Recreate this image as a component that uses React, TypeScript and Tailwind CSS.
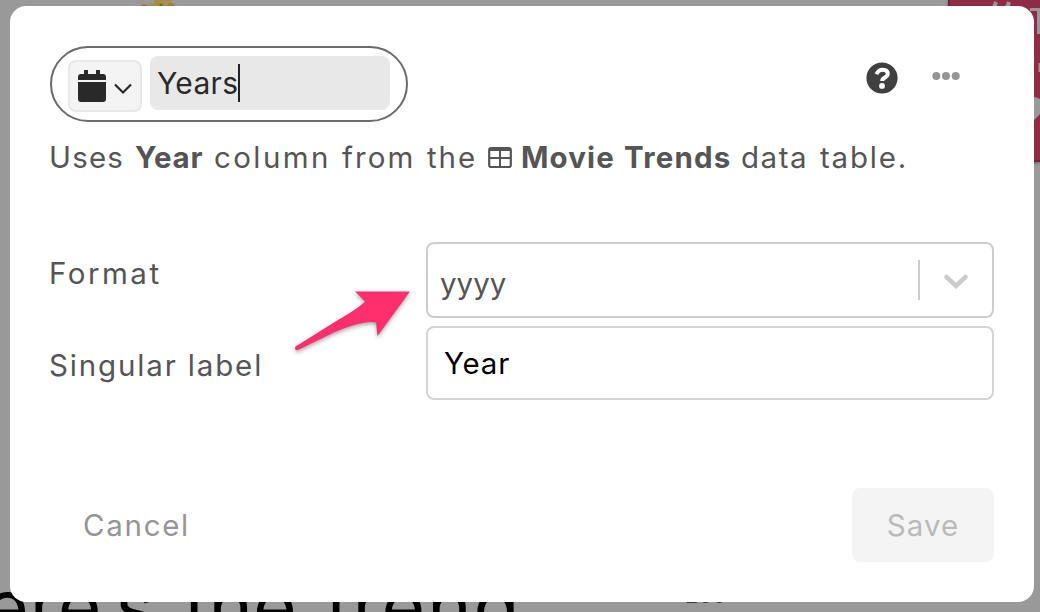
import React from "react";

function Backdrop() {
  return (
    <div className="absolute inset-0 overflow-hidden bg-[#999999]">
      <svg className="absolute left-[136px] top-0" width="44" height="12" viewBox="0 0 44 12">
        <circle cx="8" cy="8" r="4" fill="#9c7c42" />
        <circle cx="16" cy="8" r="5" fill="#a48f5b" />
        <circle cx="25" cy="1" r="7" fill="#a78c43" />
        <circle cx="32" cy="2" r="4" fill="#a48f5b" />
        <circle cx="35" cy="7" r="4" fill="#9c7c42" />
        <circle cx="25" cy="5" r="1.500" fill="#8b5b20" />
      </svg>
      <div className="absolute left-[948px] top-0 h-[162px] w-[92px] overflow-hidden border-b-2 border-l-2 border-[#6f2238] bg-[#8f2b45] text-[#999999] shadow-[0_1px_3px_rgba(0,0,0,0.4)]">
        <svg className="absolute inset-0" width="92" height="160" viewBox="0 0 92 160">
          <path d="M46 2L44 8M59 2L57 8" stroke="#999999" strokeWidth="4" />
          <path d="M80 9.500H92M88.500 9V34" stroke="#999999" strokeWidth="3" />
          <path d="M90 63V72" stroke="#999999" strokeWidth="3" />
          <path d="M84 97Q93 98 93 106Q93 113 84 120Z" fill="#999999" />
        </svg>
      </div>
      <div className="absolute left-[-15px] top-[556px] whitespace-pre text-[75px] leading-[100px] text-black">
        <span className="absolute left-0 top-0 tracking-[1px]">ere’s</span>
        <span className="absolute left-[199px] top-0">the</span>
        <span className="absolute left-[341px] top-0 tracking-[2px]">trend</span>
      </div>
      <span className="absolute left-[685px] top-[581px] text-[22px] leading-[28px] text-[#333333]">200</span>
    </div>
  );
}

function TitleEditor() {
  return (
    <div className="flex h-[76px] w-[358px] items-start rounded-full border-2 border-[#6b6b6b] pl-4 pt-2">
      <button className="mt-1 flex h-[52px] w-[74px] shrink-0 items-start rounded-lg border-2 border-[#e8e8e8] bg-[#f4f4f4]">
        <svg width="70" height="48" viewBox="0 0 70 48">
          <path
            d="M8 18V15Q8 12 11 12H14V8H18V12H26V8H30V12H33Q36 12 36 15V18ZM8 20H36V37Q36 40 33 40H11Q8 40 8 37Z"
            fill="#292929"
          />
          <path d="M45 22.500L53 30.500L61 22.500" fill="none" stroke="#292929" strokeWidth="2.200" />
        </svg>
      </button>
      <div className="ml-2 flex h-[54px] w-[240px] items-start rounded-lg bg-[#e8e8e8] pl-[7px] pt-2">
        <span className="w-[81px] whitespace-nowrap text-[30px] leading-[38px] tracking-[0.3px] text-[#292929]">Years</span>
        <span className="h-[38px] w-[2px] bg-[#222222]" />
      </div>
    </div>
  );
}

function Description() {
  return (
    <p className="-ml-px mt-[15px] flex h-10 items-center whitespace-nowrap text-[29.5px] leading-10 text-[#555555]">
      <span className="w-[86px] tracking-[1.2px]">Uses</span>
      <b className="w-[79px] tracking-[0.7px]">Year</b>
      <span className="w-[128px] tracking-[2.4px]">column</span>
      <span className="w-[85px] tracking-[2.1px]">from</span>
      <span className="w-[61px] tracking-[1.9px]">the</span>
      <svg className="w-[33px]" width="33" height="24" viewBox="0 0 33 24">
        <rect x="1.200" y="3.200" width="21.600" height="18.800" rx="2" fill="none" stroke="#555555" strokeWidth="2.200" />
        <path d="M2 4.500H22" stroke="#555555" strokeWidth="3" />
        <path d="M1 13H23M12 4V22" stroke="#555555" strokeWidth="2" />
      </svg>
      <b className="w-[103px] tracking-[1.1px]">Movie</b>
      <b className="w-[117px] tracking-[1.2px]">Trends</b>
      <span className="w-[79px] tracking-[1.5px]">data</span>
      <span className="tracking-[1.8px]">table.</span>
    </p>
  );
}

export default function App() {
  return (
    <main className="relative h-[612px] w-[1040px] overflow-hidden font-['Inter','Noto_Sans',sans-serif]">
      <Backdrop />
      <section className="relative ml-[10px] pt-[6px]">
        <div className="flex h-[596px] w-[1024px] flex-col rounded-2xl bg-white p-10">
          <header className="flex items-start justify-between">
            <TitleEditor />
            <div className="flex gap-[34px] pr-[34px] pt-4">
              <svg width="32" height="32" viewBox="0 0 32 32">
                <circle cx="16" cy="16" r="15.600" fill="#404040" />
                <path
                  d="M10.500 12.200Q12.500 7.700 16.500 7.700Q21.800 7.700 21.800 11.800Q21.800 14 19 15.500Q16.200 17 16.200 19"
                  fill="none"
                  stroke="white"
                  strokeWidth="4"
                />
                <circle cx="16" cy="23.900" r="2.900" fill="white" />
              </svg>
              <svg width="28" height="28" viewBox="0 0 28 28" fill="#959595">
                <circle cx="4.300" cy="14" r="4" />
                <circle cx="14" cy="14" r="4" />
                <circle cx="23.700" cy="14" r="4" />
              </svg>
            </div>
          </header>
          <Description />
          <div className="mt-[65px] grid grid-cols-[376px_568px] gap-y-2 text-[29.5px] leading-10 text-[#555555]">
            <label className="-ml-px pt-[11px] tracking-[2.5px]">Format</label>
            <div className="flex h-[76px] items-center rounded-lg border-2 border-[#cccccc] bg-white pl-[12px] pr-[24px]">
              <span className="grow pt-[6px]">yyyy</span>
              <span className="h-10 w-[2px] bg-[#cccccc]" />
              <svg className="ml-6 mt-[3px]" width="24" height="16" viewBox="0 0 24 16">
                <path d="M2.500 3L12 12L21.500 3" fill="none" stroke="#cccccc" strokeWidth="4.500" strokeLinecap="round" />
              </svg>
            </div>
            <label className="-ml-px pt-[19px] tracking-[1.85px]">Singular label</label>
            <div className="flex h-[74px] items-center rounded-lg border-2 border-[#d4d4d4] bg-white pl-[16px] tracking-[0.8px] text-black">
              Year
            </div>
          </div>
          <footer className="mt-auto flex h-[74px] items-center justify-between text-[29.5px]">
            <button className="pl-[33px] tracking-[1.7px] text-[#959595]">Cancel</button>
            <button className="h-[74px] w-[142px] rounded-lg bg-[#f4f4f4] tracking-[1.1px] text-[#bababa]">Save</button>
          </footer>
        </div>
      </section>
      <svg
        className="absolute left-[285px] top-[282px] drop-shadow-[0_2px_2px_rgba(0,0,0,0.35)]"
        width="140" height="80" viewBox="0 0 140 80"
      >
        <path
          d="M70 9.500L125 9.500L92.500 54L91 40.500Q79 38 49 50.500L13 68Q10 69 10 66Q10 64 13 63L53 38Q74 26 80 19.500Z"
          fill="#ff2e6c"
        />
      </svg>
    </main>
  );
}
